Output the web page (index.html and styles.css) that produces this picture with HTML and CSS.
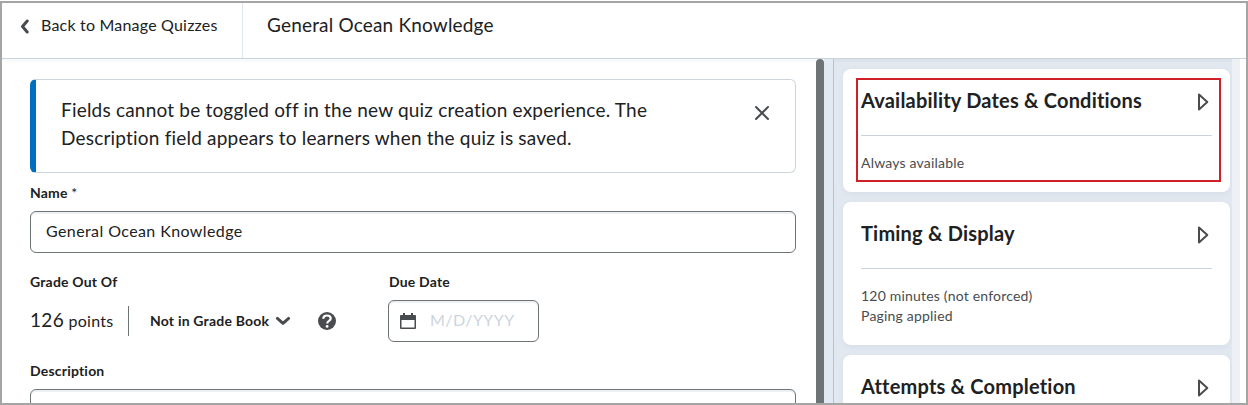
FILE: index.html
```html
<!DOCTYPE html>
<html lang="en">
<head>
	<meta charset="UTF-8">
	<title>General Ocean Knowledge</title>
	<link rel="stylesheet" href="styles.css">
</head>
<body>
<div class="frame">
	<header class="header">
		<a class="back">
			<svg class="back-icon" width="9" height="15" viewBox="0 0 9 15"><path d="M7.200 2 2.500 7.500l4.700 5.500" fill="none" stroke="#494c4e" stroke-width="3" stroke-linecap="round" stroke-linejoin="round"/></svg>
			<span>Back to Manage Quizzes</span>
		</a>
		<h1 class="title">General Ocean Knowledge</h1>
	</header>
	<div class="content">
		<main class="main">
			<div class="alert">
				<p class="alert-text">Fields cannot be toggled off in the new quiz creation experience. The<br>Description field appears to learners when the quiz is saved.</p>
				<svg class="close" width="16" height="16" viewBox="0 0 16 16"><path d="M2 2l12 12M14 2 2 14" fill="none" stroke="#494c4e" stroke-width="2" stroke-linecap="round"/></svg>
			</div>
			<label class="label name-label">Name <span class="required">*</span></label>
			<div class="input name-input"><span>General Ocean Knowledge</span></div>
			<div class="row">
				<div class="grade">
					<label class="label">Grade Out Of</label>
					<div class="grade-line">
						<span class="points"><span class="num">126</span> <span class="unit">points</span></span>
						<span class="book">Not in Grade Book</span>
						<svg class="chevron" width="16" height="10" viewBox="0 0 16 10"><path d="M2.400 2.400 8 7.300l5.600-4.900" fill="none" stroke="#494c4e" stroke-width="3" stroke-linecap="round" stroke-linejoin="round"/></svg>
						<svg class="help" width="18" height="18" viewBox="0 0 18 18"><circle cx="9" cy="9" r="9" fill="#494c4e"/><path d="M5.300 6.800c0-2 1.600-3.300 3.700-3.300s3.700 1.200 3.700 3c0 2.500-3.500 2.400-3.500 5" fill="none" stroke="#fff" stroke-width="2.200"/><circle cx="9.100" cy="14.400" r="1.400" fill="#fff"/></svg>
					</div>
				</div>
				<div class="due">
					<label class="label">Due Date</label>
					<div class="input date-input">
						<svg width="16" height="16" viewBox="0 0 16 16"><path d="M3 0h2v2h6V0h2v2h2a1 1 0 0 1 1 1v12a1 1 0 0 1-1 1H1a1 1 0 0 1-1-1V3a1 1 0 0 1 1-1h2zM1.500 7v7.500h13V7z" fill="#494c4e" fill-rule="evenodd"/></svg>
						<span class="placeholder">M/D/YYYY</span>
					</div>
				</div>
			</div>
			<label class="label desc-label">Description</label>
			<div class="input editor"></div>
		</main>
		<div class="scrollbar"></div>
		<div class="divider"></div>
		<aside class="side">
			<section class="card card-first">
				<div class="card-head">
					<h2>Availability Dates &amp; Conditions</h2>
					<svg width="11" height="18" viewBox="0 0 11 18"><path d="M1 1.500v15L9.300 9z" fill="none" stroke="#494c4e" stroke-width="2" stroke-linejoin="round"/></svg>
				</div>
				<p class="summary">Always available</p>
				<div class="highlight"></div>
			</section>
			<section class="card card-second">
				<div class="card-head">
					<h2>Timing &amp; Display</h2>
					<svg width="11" height="18" viewBox="0 0 11 18"><path d="M1 1.500v15L9.300 9z" fill="none" stroke="#494c4e" stroke-width="2" stroke-linejoin="round"/></svg>
				</div>
				<p class="summary">120 minutes (not enforced)<br>Paging applied</p>
			</section>
			<section class="card">
				<div class="card-head">
					<h2>Attempts &amp; Completion</h2>
					<svg width="11" height="18" viewBox="0 0 11 18"><path d="M1 1.500v15L9.300 9z" fill="none" stroke="#494c4e" stroke-width="2" stroke-linejoin="round"/></svg>
				</div>
			</section>
		</aside>
		<div class="side-track"></div>
	</div>
</div>
</body>
</html>
```
FILE: styles.css
```css
*{
	box-sizing: border-box;
}
body{
	margin: 0;
	padding-top: 1px;
	height: 405px;
	overflow: hidden;
	background: #fff;
	color: #202122;
	font-family: Lato, "Liberation Sans", sans-serif;
	white-space: nowrap;
}
h1,h2,p{
	margin: 0;
}
svg{
	display: block;
	flex: none;
}
.frame{
	height: 404px;
	border: 2px solid #a5a5a5;
	display: flex;
	flex-direction: column;
	overflow: hidden;
}
.header{
	height: 56px;
	flex: none;
	display: flex;
	border-bottom: 1px solid #c8d3de;
}
.back{
	width: 241px;
	border-right: 1px solid #dfe6ee;
	display: flex;
	align-items: center;
	padding: 0 0 8px 18px;
	font-size: 16px;
	line-height: 20px;
	letter-spacing: 0.2px;
}
.back span{
	padding-bottom: 3px;
}
.back-icon{
	margin-right: 12px;
}
.title{
	padding: 8px 0 0 24px;
	font-size: 19px;
	line-height: 28px;
	font-weight: 400;
	letter-spacing: 0.18px;
}
.content{
	flex: 1;
	min-height: 0;
	display: flex;
}
.main{
	width: 814px;
	padding: 20px 20px 0 28px;
	box-shadow: inset 0 3px #f9fafb;
	overflow: hidden;
}
.alert{
	height: 94px;
	display: flex;
	justify-content: space-between;
	border: 1px solid #cdd5dc;
	border-left: 6px solid #006fbf;
	border-radius: 6px;
	padding: 16px 25px 0 25px;
}
.alert-text{
	font-size: 19px;
	line-height: 28px;
	letter-spacing: 0.2px;
}
.close{
	margin-top: 9px;
}
.label{
	display: block;
	font-size: 14px;
	line-height: 20px;
	font-weight: 700;
	letter-spacing: 0.2px;
}
.required{
	font-weight: 400;
}
.name-label{
	margin-top: 10px;
}
.input{
	height: 42px;
	border: 1px solid #6e7376;
	border-radius: 6px;
	box-shadow: inset 0 2px #eef1f4;
	display: flex;
	align-items: center;
	font-size: 16px;
	letter-spacing: 0.4px;
}
.input span{
	padding-bottom: 3px;
}
.name-input{
	margin-top: 8px;
	padding-left: 15px;
}
.row{
	display: flex;
	margin-top: 19px;
}
.grade{
	width: 358px;
}
.grade-line{
	display: flex;
	align-items: center;
	height: 30px;
	margin-top: 14px;
}
.points{
	width: 99px;
	height: 30px;
	line-height: 27px;
	border-right: 1px solid #6e7376;
	letter-spacing: 0.3px;
}
.num{
	font-size: 19px;
}
.unit{
	font-size: 16px;
}
.book{
	width: 126px;
	margin-left: 21px;
	margin-right: -1px;
	font-size: 14px;
	line-height: 20px;
	padding-bottom: 1px;
	font-weight: 700;
	letter-spacing: 0.2px;
}
.help{
	margin-left: 27px;
}
.due .label{
	padding-left: 1px;
}
.date-input{
	width: 151px;
	margin-top: 8px;
	padding-left: 11px;
}
.placeholder{
	margin-left: 14px;
	color: #cdd5dc;
}
.desc-label{
	margin-top: 19px;
}
.editor{
	margin-top: 8px;
}
.scrollbar{
	width: 8px;
	background: #6e7376;
	border-radius: 4px 4px 0 0;
}
.divider{
	width: 10px;
	background: #e3e9f1;
	border-right: 1px solid #b9c2d0;
}
.side{
	width: 398px;
	padding: 10px 2px 0 9px;
	background: #e2e8f0;
	box-shadow: inset 0 3px #dbe2ea;
	overflow: hidden;
}
.card{
	position: relative;
	height: 143px;
	padding: 0 18px;
	margin-bottom: 10px;
	background: #fff;
	border-radius: 8px;
	box-shadow: 0 2px 6px rgba(73,90,120,0.06);
}
.card-first{
	height: 123px;
}
.card-head{
	height: 67px;
	display: flex;
	justify-content: space-between;
	padding-top: 17px;
	border-bottom: 1px solid #c8d3de;
}
.card-head h2{
	font-size: 20px;
	line-height: 28px;
	font-weight: 700;
	letter-spacing: 0.2px;
}
.card-head svg{
	margin: 7px 3px 0 0;
}
.summary{
	margin-top: 17px;
	font-size: 14px;
	line-height: 20px;
	letter-spacing: 0.2px;
	color: #494c4e;
}
.highlight{
	position: absolute;
	left: 13px;
	top: 9px;
	width: 365px;
	height: 104px;
	border: 2px solid #cf2027;
}
.side-track{
	width: 8px;
	background: #edf1f6;
}
```
